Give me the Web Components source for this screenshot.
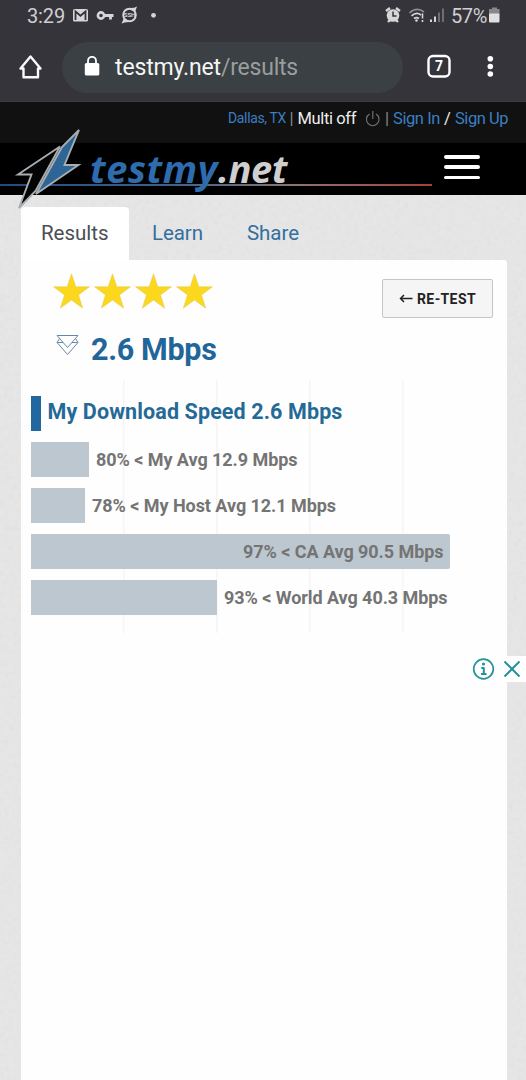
<!DOCTYPE html>
<html lang="en">
<head>
<meta charset="utf-8">
<title>testmy.net/results</title>
<style>
html,body{margin:0;height:1080px;overflow:hidden;background:#e4e4e4;font-family:Roboto,"Liberation Sans",sans-serif}
</style>
</head>
<body>
<phone-screen>
  <status-bar></status-bar>
  <browser-bar></browser-bar>
  <account-bar></account-bar>
  <brand-bar></brand-bar>
  <result-page></result-page>
</phone-screen>
<script>
function element(name, html, setup) {
  const template = document.createElement('template');
  template.innerHTML = html;
  customElements.define(name, class extends HTMLElement {
    connectedCallback() {
      if (this.shadowRoot) return;
      this.attachShadow({mode: 'open'}).append(template.content.cloneNode(true));
      if (setup) setup.call(this, this.shadowRoot);
    }
  });
}

element('phone-screen', `
<style>:host{display:flex;flex-direction:column;width:526px;height:1080px;overflow:hidden}</style><slot></slot>`);

element('status-bar', `
<style>
:host{display:flex;align-items:center;height:32px;box-sizing:border-box;padding:0 26px 0 27px;background:#35343a;color:#cfcfd2;font-size:20px;line-height:32px}
svg{display:block;flex:none}
.gap{flex:1}
</style>
<fit-text w="38">3:29</fit-text>
<svg width="96" height="32" viewBox="65 0 96 32">
  <rect x="73" y="9" width="15" height="12.5" rx="1.5" fill="#d6d6d8"/>
  <path d="M75.5 20v-8.5l5 4.3 5-4.3V20" fill="none" stroke="#35343a" stroke-width="1.8"/>
  <circle cx="101" cy="15.5" r="3.1" fill="none" stroke="#d6d6d8" stroke-width="2.6"/>
  <path d="M104.500 15.500h9M110.500 15.500v4" stroke="#d6d6d8" stroke-width="2.8" fill="none"/>
  <circle cx="129.500" cy="15" r="6.300" fill="none" stroke="#d6d6d8" stroke-width="1.9"/>
  <path d="M128 8q6 .5 9-1.500l-2 5.500zM131 22q-6-.5-9.500 1.500l2.500-5.500z" fill="#d6d6d8"/>
  <text x="129.500" y="17.200" text-anchor="middle" font-size="6" font-weight="700" fill="#d6d6d8">SSH</text>
  <circle cx="153.500" cy="15.300" r="2.400" fill="#d6d6d8"/>
</svg>
<span class="gap"></span>
<svg width="63" height="32" viewBox="384 0 63 32" fill="none" stroke="#d6d6d8">
  <circle cx="393" cy="15.500" r="6.300" fill="#d6d6d8" stroke="none"/>
  <path d="M386 11l4-3M400 11l-4-3M388 22l2-2M398 22l-2-2" stroke-width="2.400"/>
  <path d="M393 11.500V16h3.500" stroke="#35343a" stroke-width="1.500"/>
  <g stroke-width="1.700"><path d="M409.500 13q7-6.500 14.500-1" stroke="#8d8d92"/><path d="M411.500 15.800q5-4.300 9.500-.8M414 18.500q2.500-1.800 5 0"/></g>
  <circle cx="416.500" cy="20.500" r="1.300" fill="#d6d6d8" stroke="none"/>
  <path d="M422.500 13.500v5M422.500 20v2" stroke-width="1.600"/>
  <path d="M431 19.500V22M435 16.500V22" stroke-width="2"/><path d="M439 12.500V22M443 8.500V22" stroke="#6d6d72" stroke-width="2"/>
</svg>
<fit-text w="36" style="margin-left:4px">57%</fit-text>
<svg width="13" height="32" viewBox="487 0 13 32"><path d="M492 7.500h5V9h2.500v6H489V9h3z" fill="#88888c"/><rect x="489" y="13.500" width="10.500" height="9" rx="1" fill="#e0e0e2"/></svg>`);

element('browser-bar', `
<style>
:host{display:flex;align-items:center;height:70px;box-sizing:border-box;padding:1px 0 0 19px;background:#35343a;border-bottom:1px solid #3d3c42}
.pill{display:flex;align-items:center;width:341px;height:51px;box-sizing:border-box;border-radius:26px;background:#3a4043;margin-left:19px;padding-left:22px;color:#f4f5f5;font-size:23px;line-height:51px}
.pill fit-text{margin-left:15px}.pill fit-text+fit-text{margin-left:0;color:#999e9f}
svg{display:block;flex:none}
</style>
<svg width="24" height="26" viewBox="19 54 24 26"><path d="M20.500 68.500 30.500 56.500 40.500 68.500H38V77.200H23.500V68.500z" fill="none" stroke="#fafafa" stroke-width="2.400" stroke-linejoin="round"/></svg>
<div class="pill">
  <svg width="16" height="22" viewBox="84 56 16 22"><rect x="84.800" y="63" width="14.500" height="12.500" rx="1.600" fill="#fff"/><path d="M88 64v-3.200a4 4 0 0 1 8 0V64" fill="none" stroke="#fff" stroke-width="1.800"/></svg>
  <fit-text w="106">testmy.net</fit-text><fit-text w="77">/results</fit-text>
</div>
<svg width="80" height="34" viewBox="420 50 80 34" style="margin-left:17px">
  <rect x="428.500" y="56" width="21" height="20.500" rx="4.500" fill="none" stroke="#fff" stroke-width="2.400"/>
  <text x="439" y="71" text-anchor="middle" fill="#fff" font-size="14" font-weight="700">7</text>
  <g fill="#fff"><circle cx="490.300" cy="58.800" r="2.800"/><circle cx="490.300" cy="66.500" r="2.800"/><circle cx="490.300" cy="74" r="2.800"/></g>
</svg>`);

element('account-bar', `
<style>
:host{display:flex;height:41px;flex:none;background:#111;padding-left:228px;color:#ededed;font-size:16.500px;line-height:33px}
fit-text{flex:none}
.city,.link{color:#3b7fc1}.city{font-size:14px}.bar{color:#8b8b8b}
svg{display:block}
</style>
<fit-text w="58" class="city">Dallas, TX</fit-text>
<fit-text w="4" class="bar" style="margin-left:3.500px">|</fit-text>
<fit-text w="58.500" style="margin-left:4px">Multi off</fit-text>
<svg width="17" height="33" viewBox="364 0 17 33" style="margin:0 4px 0 8px" fill="none" stroke="#777"><path d="M369.500 12a6.300 6.300 0 1 0 6.500 0M372.800 9v8" stroke-width="1.100"/></svg>
<fit-text w="4" class="bar">|</fit-text>
<fit-text w="47" class="link" style="margin-left:4px">Sign In</fit-text>
<fit-text w="7" style="margin-left:4px">/</fit-text>
<fit-text w="53" class="link" style="margin-left:4px">Sign Up</fit-text>`);

element('brand-bar', `
<style>
:host{display:flex;position:relative;z-index:2;height:52px;flex:none;background:#000;font-family:"Open Sans","Noto Sans",sans-serif;font-style:italic;font-weight:700;font-size:38px;line-height:50px;padding-left:90px}
.blue{color:#2e6cae}.grey{color:#cfcfcf}
.rule{position:absolute;left:0;top:41px;width:432px;height:1.500px;background:linear-gradient(90deg,#234a80,#41618a 40%,#8d7472 68%,#a5413a)}
.bolt{position:absolute;left:10px;top:-20px}
.menu{margin-left:157px;display:flex;flex-direction:column;gap:6.500px;padding-top:12px}
.menu i{display:block;width:36px;height:3.800px;border-radius:2px;background:#fff}
.word{position:relative}
</style>
<div class="rule"></div>
<fit-text w="128" class="word blue">testmy</fit-text><fit-text w="69" class="word grey">.net</fit-text>
<div class="menu"><i></i><i></i><i></i></div>
<svg class="bolt" width="80" height="92" viewBox="10 123 80 92" stroke="#a9adb0" stroke-width="1.900" stroke-linejoin="miter">
  <path d="M60 146.500 18 174.500H31.500L19 208 35.500 191z" fill="#040404"/>
  <path d="M79 130 62 147 36 194 78.500 165H64.500z" fill="#2d6696"/>
</svg>`);

element('result-page', `
<style>
:host{display:block;position:relative;flex:1;background:#e7e7e7}
.paper{position:absolute;inset:0;width:100%;height:100%;opacity:.09}
.body{position:relative;display:flex;flex-direction:column;height:100%;box-sizing:border-box;padding:12px 19px 0 21px}
nav{display:flex;height:53px;line-height:52px;font-size:20.500px;color:#346f9e}
.tab{width:108px;box-sizing:border-box;padding-left:20px;background:#fff;border-radius:4px 4px 0 0;color:#4b4f53}
main{flex:1;background:#fefefe;border-radius:0 3px 0 0}
.top{display:flex;justify-content:space-between;height:58px;padding:0 14px 0 32px}
.button{display:flex;align-items:center;box-sizing:border-box;width:111px;height:39px;margin-top:19px;border:1.500px solid #c5c5c5;border-radius:2px;background:#f5f5f5;color:#222;font-size:14px;font-weight:700;line-height:36px;padding-left:16px}
.speed{display:flex;height:62px;padding-left:35px;color:#226699;font-size:30.500px;font-weight:700;line-height:64px}
.speed fit-text{margin-left:12px}
svg{display:block}
.ads{position:absolute;right:0;top:461px;width:56px;height:26px;background:#fff}
</style>
<svg class="paper"><filter id="grain"><feTurbulence type="fractalNoise" baseFrequency=".22" numOctaves="3"/><feColorMatrix type="saturate" values="0"/></filter><rect width="100%" height="100%" filter="url(#grain)"/></svg>
<div class="body">
  <nav><div class="tab"><fit-text w="67.500">Results</fit-text></div><fit-text w="51" style="margin-left:23px">Learn</fit-text><fit-text w="52" style="margin-left:44px">Share</fit-text></nav>
  <main>
    <div class="top"><star-rating></star-rating>
      <div class="button"><svg width="15" height="14" viewBox="0 0 15 14" fill="none" stroke="#222" stroke-width="1.500"><path d="M13.500 6.500H1.500M5 3 1.500 6.500l3.500 3.500"/></svg><fit-text w="59" style="margin-left:3px">RE-TEST</fit-text></div>
    </div>
    <div class="speed"><svg width="23" height="62" viewBox="56 318 23 62" fill="none" stroke="#6688a8" stroke-width="1"><path d="M57 335.500H78L67.500 347.500zM59.500 338.500 57 342.500 67.500 354.500 78 342.500 75.500 338.500M57.500 342.500H63M72 342.500H77.500"/></svg><fit-text w="125.500">2.6 Mbps</fit-text></div>
    <speed-chart></speed-chart>
  </main>
</div>
<svg class="ads" width="56" height="26" viewBox="470 656 56 26" fill="none" stroke="#24939b"><circle cx="483.500" cy="669" r="9.800" stroke-width="1.700"/><path d="M483.800 667.500V674M481.300 668h3M481 674h5.500" stroke-width="2"/><circle cx="483.500" cy="664" r="1.600" fill="#24939b" stroke="none"/><path d="M504.500 661.500l15 15M519.500 661.500l-15 15" stroke-width="2"/></svg>`);

element('star-rating', `
<style>:host{display:flex;gap:4px;padding-top:12.500px}svg{display:block;width:37px;height:37px}</style>`, function (root) {
  for (let i = 0; i < 4; i++) root.innerHTML += '<svg viewBox="0 0 37 37"><path d="M18.500 .8 22.800 13.800H36.500L25.500 21.900 29.700 35.200 18.500 27.100 7.300 35.200 11.500 21.900 .5 13.800H14.200z" fill="#fbd71d" stroke="#e9cf55" stroke-width=".6"/></svg>';
});

element('speed-chart', `
<style>
:host{display:flex;flex-direction:column;gap:11.500px;margin-left:9.500px;width:460px;height:253px;box-sizing:border-box;padding-top:16px;
background:linear-gradient(#f5f5f5,#f5f5f5) 92px 0/1.500px 100% no-repeat,linear-gradient(#f5f5f5,#f5f5f5) 185px 0/1.500px 100% no-repeat,linear-gradient(#f5f5f5,#f5f5f5) 278px 0/1.500px 100% no-repeat,linear-gradient(#f5f5f5,#f5f5f5) 371px 0/1.500px 100% no-repeat}
</style>
<speed-row bar="10.500" pad="6.500" w="295" main>My Download Speed 2.6 Mbps</speed-row>
<speed-row bar="58.500" pad="7" w="201.500">80% &lt; My Avg 12.9 Mbps</speed-row>
<speed-row bar="54.500" pad="7" w="244">78% &lt; My Host Avg 12.1 Mbps</speed-row>
<speed-row bar="419" w="200.500" inside>97% &lt; CA Avg 90.5 Mbps</speed-row>
<speed-row bar="186.500" pad="7" w="223.500">93% &lt; World Avg 40.3 Mbps</speed-row>`);

element('speed-row', `
<style>
:host{display:flex;height:34.500px;line-height:35px;color:#747474;font-size:18px;font-weight:700}
:host([main]){color:#246a96;font-size:21.500px;line-height:32px}
.bar{background:#bcc7d0;height:100%;flex:none;box-sizing:border-box}
:host([main]) .bar{background:#20689f}
:host([inside]) .bar{display:flex;justify-content:flex-end;padding-right:6px;border-radius:0 2px 2px 0}
</style><div class="bar"></div><fit-text class="label"><slot></slot></fit-text>`, function (root) {
  const bar = root.querySelector('.bar'), label = root.querySelector('.label');
  bar.style.width = this.getAttribute('bar') + 'px';
  label.setAttribute('w', this.getAttribute('w'));
  label.setAttribute('n', this.textContent.length);
  label.style.marginLeft = (this.getAttribute('pad') || 0) + 'px';
  if (this.hasAttribute('inside')) bar.append(label);
});

/* Spreads its text over the width given by the w attribute. */
element('fit-text', `<style>:host{display:inline-block;white-space:pre;flex:none}</style><slot></slot>`, function () {
  const w = +this.getAttribute('w'), n = +this.getAttribute('n') || this.textContent.length;
  const natural = this.getBoundingClientRect().width;
  this.style.letterSpacing = (w - natural) / n + 'px';
  this.style.width = w + 'px';
});
</script>
</body>
</html>
